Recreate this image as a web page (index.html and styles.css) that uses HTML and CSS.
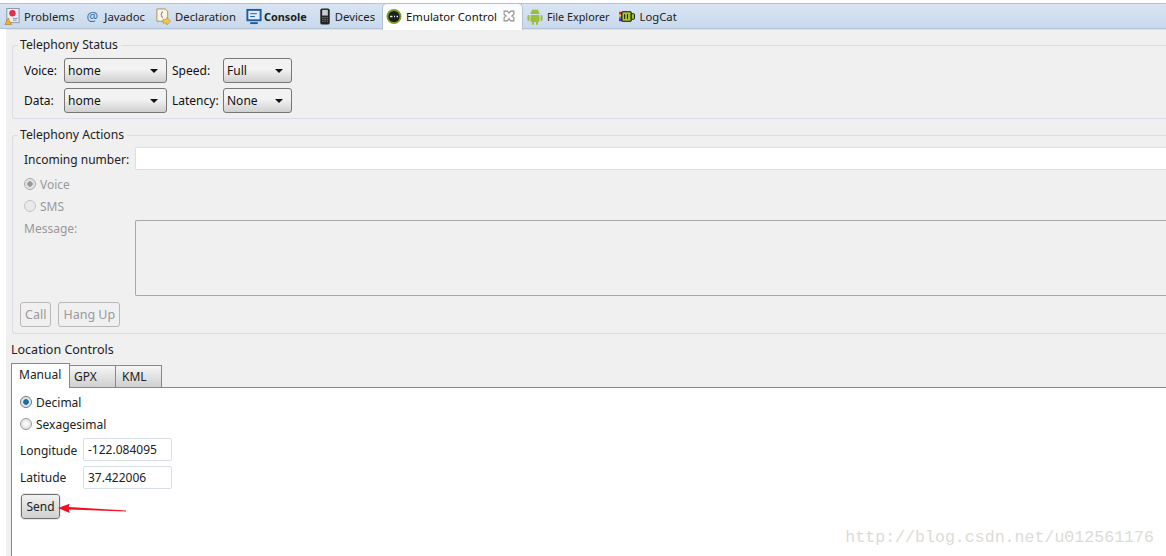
FILE: index.html
```html
<!DOCTYPE html>
<html lang="en">
<head>
<meta charset="utf-8">
<title>Emulator Control</title>
<link rel="stylesheet" href="styles.css">
</head>
<body>
<div class="tabbar">
  <div class="vtab"><svg class="ic" viewBox="0 0 16 18"><rect x="2.500" y="0.500" width="13" height="15" fill="#e8eef6" stroke="#8a93a8"/><circle cx="8.500" cy="5.500" r="3.400" fill="#e0304a"/><path d="M0.500 17.500 L4 10.500 L7.500 17.500 Z" fill="#f0b030" stroke="#a87818" stroke-width=".6"/><path d="M9 11h5M9 13h4" stroke="#7a8aa8"/></svg>Problems</div>
  <div class="vtab"><span class="at">@</span>Javadoc</div>
  <div class="vtab"><svg class="ic" viewBox="0 0 16 18"><path d="M1.500 1h9l2.500 3v10H1.500z" fill="#fbf4df" stroke="#a89058"/><path d="M8 4c-2 0-1 2-2 3 1 1 0 3 2 3" fill="none" stroke="#4a6a98"/><path d="M8 12h4v-2l4 4-4 4v-2H8z" fill="#f0c850" stroke="#a88828" stroke-width=".6"/></svg>Declaration</div>
  <div class="vtab strong"><svg class="ic" viewBox="0 0 16 18"><rect x="1" y="2" width="14" height="11" fill="#dfeafa" stroke="#1e5a9e" stroke-width="2"/><path d="M4 6h7M4 9h5" stroke="#1e5a9e"/><path d="M4 16h8" stroke="#1e5a9e" stroke-width="2"/></svg>Console</div>
  <div class="vtab devices"><svg class="ic" viewBox="0 0 16 18"><rect x="3" y="0.500" width="10" height="17" rx="2" fill="#222"/><rect x="5" y="2" width="6" height="6" fill="#c8ccd0"/><path d="M5 10h6M5 12h6M5 14h6" stroke="#888" stroke-dasharray="1.4 1"/></svg>Devices</div>
  <div class="vtab current"><svg class="ic" viewBox="0 0 16 16"><circle cx="8" cy="8" r="7.500" fill="#7d9a2c"/><circle cx="8" cy="8" r="5.600" fill="#1d1f1a"/><path d="M4 8h2.500M8 8h1M10.500 8h1.500" stroke="#e8e8e8" stroke-width="1.400"/></svg>Emulator Control<svg class="close" viewBox="0 0 11 11"><path d="M1 1l3 0 1.500 1.800L7 1l3 0 0 3L8 5.500 10 7v3H7L5.500 8 4 10H1V7l2-1.500L1 4z" fill="#fff" stroke="#8e8e8e"/></svg></div>
  <div class="vtab explorer"><svg class="ic" viewBox="0 0 16 17"><path d="M3.500 6a4.500 4.500 0 0 1 9 0z" fill="#9cbf3b"/><path d="M5 1.500l1 2M11 1.500l-1 2" stroke="#9cbf3b"/><rect x="3.500" y="7" width="9" height="7" rx="1" fill="#9cbf3b"/><rect x="0.500" y="7" width="2" height="6" rx="1" fill="#9cbf3b"/><rect x="13.500" y="7" width="2" height="6" rx="1" fill="#9cbf3b"/><rect x="5" y="13" width="2" height="4" rx="1" fill="#9cbf3b"/><rect x="9" y="13" width="2" height="4" rx="1" fill="#9cbf3b"/></svg>File Explorer</div>
  <div class="vtab"><svg class="ic" viewBox="0 0 17 14"><path d="M0 2h4v3H0z" fill="#e8281c"/><path d="M0 5h4v2H0z" fill="#f0d020"/><path d="M0 7h4v2H0z" fill="#30b040"/><path d="M0 9h4v3H0z" fill="#7020d0"/><rect x="3" y="2" width="10" height="10" rx="1" fill="#a8c232" stroke="#111" stroke-width="1.200"/><rect x="13" y="4" width="3.500" height="6" rx="1" fill="#a8c232" stroke="#111"/><path d="M6 4.500v5M9 4.500v5" stroke="#111"/></svg>LogCat</div>
</div>

<main class="view">
  <fieldset class="group status">
    <legend>Telephony Status</legend>
    <div class="status-grid">
      <span>Voice:</span><div class="combo wide"><span>home</span><i></i></div>
      <span>Speed:</span><div class="combo"><span>Full</span><i></i></div>
      <span>Data:</span><div class="combo wide"><span>home</span><i></i></div>
      <span>Latency:</span><div class="combo"><span>None</span><i></i></div>
    </div>
  </fieldset>

  <fieldset class="group actions">
    <legend>Telephony Actions</legend>
    <div class="number-row"><span class="num-label">Incoming number:</span><div class="field"></div></div>
    <div class="radio off on">Voice</div>
    <div class="radio off">SMS</div>
    <div class="message-row"><span class="num-label muted">Message:</span><div class="field area"></div></div>
    <div class="buttons"><div class="btn">Call</div><div class="btn">Hang Up</div></div>
  </fieldset>

  <section class="location">
    <h2>Location Controls</h2>
    <div class="tabs">
      <div class="tab active">Manual</div>
      <div class="tab gpx">GPX</div>
      <div class="tab kml">KML</div>
    </div>
    <div class="pane">
      <div class="radio blue">Decimal</div>
      <div class="radio">Sexagesimal</div>
      <div class="coord lon"><span>Longitude</span><div class="input">-122.084095</div></div>
      <div class="coord"><span>Latitude</span><div class="input">37.422006</div></div>
      <div class="send-row">
        <div class="send">Send</div>
        <svg class="arrow" viewBox="0 0 72 12"><path d="M0 5 L12 0.500 L11 4 L70 7.500 L70 8.500 L11 6.500 L12 10z" fill="#f01020"/></svg>
      </div>
      <div class="mark">http://blog.csdn.net/u012561176</div>
    </div>
  </section>
</main>
</body>
</html>
```
FILE: styles.css
```css
html, body { margin: 0; height: 100%; overflow: hidden; background: #fff; }
body { width: 1166px; height: 556px; font-family: "Noto Sans", "Open Sans", sans-serif; font-size: 12px; color: #111; padding-top: 3px; box-sizing: border-box; }

.tabbar { display: flex; align-items: stretch; height: 26px; box-sizing: border-box; padding-left: 4px; background: linear-gradient(#d9e4f2, #c9daed); border-top: 1px solid #b8c3d8; border-bottom: 1px solid #b4c2d6; font-size: 11.300px; }
.vtab { display: flex; align-items: center; padding: 0 8px 0 0; white-space: nowrap; color: #222; margin-right: 2px; }
.ic { width: 16px; height: 17px; margin-right: 4px; flex: none; }
.at { width: 16px; margin: 0 4px 0 0; color: #3a6ea8; text-align: center; font-size: 13px; }
.strong { font-weight: 700; font-size: 10.900px; }
.strong .ic { margin-right: 2px; }
.devices .ic { margin-right: 2px; }
.explorer { font-size: 10.800px; }
.current { background: linear-gradient(#f6f9fd, #fff 40%); height: 27px; margin: -1px 4px -2px -3px; padding: 0 7px 2px 3px; border-radius: 5px 5px 0 0; border: 1px solid #b4c2d6; border-bottom: 0; box-sizing: border-box; color: #111; position: relative; z-index: 1; }
.close { width: 12px; height: 12px; margin-left: 6px; }

.view { margin-left: 6px; height: 527px; background: #f0f0f0; display: flex; flex-direction: column; padding: 0 0 0 5px; border-top: 1px solid #dfe3e8; box-sizing: border-box; overflow: hidden; }

.group { margin: 0; min-width: 0; padding: 0 0 0 11px; border: 1px solid #d8dee3; border-right: 0; border-radius: 3px 0 0 3px; position: relative; }
.group legend { padding: 0 3px 0 2px; margin-left: -6px; font-size: 12.200px; line-height: 16px; color: #222; }
.status { margin: 7px 0 0 1px; height: 80px; }
.actions { margin: 8px 0 0 1px; height: 205px; }

.status-grid { display: grid; grid-template-columns: 40px 108px 51px 69px; grid-auto-rows: 25px; row-gap: 5px; margin-top: 5px; align-items: center; }
.combo { height: 25px; box-sizing: border-box; border: 1px solid #777; border-radius: 3px; background: linear-gradient(#f2f2f2 45%, #d0d0d0); display: flex; align-items: center; justify-content: space-between; padding: 0 8px 0 3px; }
.combo.wide { width: 103px; }
.combo i { width: 0; height: 0; border: 4px solid transparent; border-top: 4px solid #111; border-bottom: 0; }

.number-row { display: flex; align-items: center; margin-top: 4px; height: 23px; }
.num-label { width: 111px; flex: none; color: #222; }
.number-row .num-label { padding-top: 1px; }
.muted { color: #999; }
.field { flex: 1; height: 23px; background: #fff; border: 1px solid #d9dfe6; border-right: 0; box-sizing: border-box; border-radius: 2px 0 0 2px; }
.message-row { display: flex; align-items: flex-start; margin-top: 3px; }
.field.area { height: 76px; background: #f0f0f0; border-color: #a8a8a8; flex: 1; }

.radio { display: flex; align-items: center; height: 22px; color: #999; }
.number-row + .radio { margin-top: 3px; }
.radio::before { content: ""; width: 12px; height: 12px; box-sizing: border-box; margin-right: 4px; border-radius: 50%; border: 1px solid #999; background: radial-gradient(#fff, #d8d8d8); flex: none; }
.radio.off::before { border-color: #c4c4c4; background: #eaeaea; }
.radio.off.on::before { background: radial-gradient(#999 35%, #e4e4e4 42%); border-color: #aaa; }
.radio.blue::before { background: radial-gradient(#1b6fa8 35%, #dfe6ee 45%); border-color: #777; }

.buttons { display: flex; gap: 7px; margin: 6px 0 0 -4px; }
.btn { height: 25px; box-sizing: border-box; padding: 0 4px; display: flex; align-items: center; border: 1px solid #b8b8b8; border-radius: 3px; color: #9a9a9a; font-size: 12.500px; min-width: 31px; justify-content: center; }

.location { display: flex; flex-direction: column; flex: 1; margin-top: 8px; }
.location h2 { margin: 0; font-weight: 400; font-size: 12.500px; line-height: 16px; color: #222; height: 21px; }
.tabs { display: flex; height: 25px; position: relative; z-index: 1; }
.tab { height: 23px; margin-top: 2px; box-sizing: border-box; border: 1px solid #888; border-left: 0; background: linear-gradient(#f6f6f6, #cfcfcf); padding: 1px 0 0 4px; line-height: 20px; color: #222; }
.tab.gpx { width: 46px; }
.tab.kml { width: 46px; padding-left: 6px; }
.tab.active { height: 25px; margin-top: 0; width: 59px; background: #fff; border-left: 1px solid #888; border-bottom: 0; padding: 2px 0 0 7px; line-height: 18px; }
.pane { flex: 1; margin-top: -1px; background: #fff; border-top: 1px solid #888; border-left: 1px solid #888; padding: 3px 0 0 8px; position: relative; }
.pane .radio { color: #222; }
.coord { display: flex; align-items: center; height: 23px; margin-bottom: 5px; }
.radio + .coord { margin-top: 3px; }
.coord span { width: 63px; color: #222; }
.coord.lon span { padding-top: 1px; }
.input { width: 89px; height: 23px; box-sizing: border-box; border: 1px solid #d9dfe6; border-radius: 2px; padding: 0 4px; line-height: 21px; color: #222; }
.send-row { display: flex; align-items: center; margin: 2px 0 0 1px; position: relative; }
.send { width: 39px; height: 25px; box-sizing: border-box; border: 1px solid #707070; border-radius: 3px; background: linear-gradient(#f2f2f2, #d0d0d0); text-align: center; line-height: 24px; outline: 1px solid #e8e8e8; color: #222; }
.arrow { width: 70px; height: 12px; margin: 5px 0 0 -2px; }
.mark { position: absolute; right: 12px; bottom: 9px; font-family: "Liberation Mono", monospace; font-size: 16.600px; color: #dcdcd6; }
```
